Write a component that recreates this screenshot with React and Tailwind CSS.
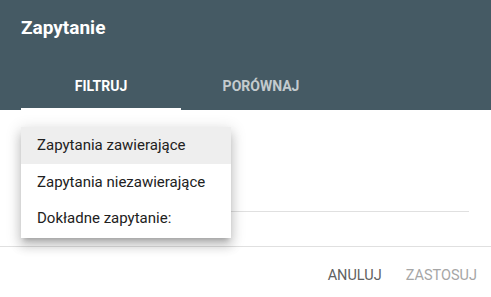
export default function App() {
  return (
    <div className="relative w-[491px] h-[297px] bg-white overflow-hidden" style={{ fontFamily: "Roboto, 'Liberation Sans', sans-serif" }}>
      <div className="bg-[#455a64]">
        <div className="h-[62px] pl-[21px] pt-[16px]">
          <div className="text-[19px] leading-[24px] font-bold text-white">Zapytanie</div>
        </div>
        <div className="flex pl-[21px] h-[48px]">
          <div className="relative w-[160px] flex items-center justify-center text-[14px] font-bold text-white uppercase">
            Filtruj
            <div className="absolute left-0 right-0 bottom-0 h-[2px] bg-white" />
          </div>
          <div className="w-[160px] flex items-center justify-center text-[14px] font-bold text-white/70 uppercase">
            Porównaj
          </div>
        </div>
      </div>
      <div className="px-[21px] pr-[22px] pt-[16px]">
        <div className="h-[86px] border-b border-[#e0e0e0]" />
      </div>
      <div className="mt-[34px] border-t border-[#e0e0e0] flex justify-end gap-2 pr-[6px] pt-[11px]">
        <button className="px-2 h-[36px] text-[14.5px] text-[#616161] uppercase">Anuluj</button>
        <button className="px-2 h-[36px] text-[14.5px] text-[#a6a6a6] uppercase">Zastosuj</button>
      </div>
      <div className="absolute left-[21px] top-[127px] w-[210px] bg-white pb-[2px] shadow-[0_5px_5px_-3px_rgba(0,0,0,0.2),0_8px_10px_1px_rgba(0,0,0,0.14),0_3px_14px_2px_rgba(0,0,0,0.12)]">
        <div className="h-[37px] flex items-center pl-[16px] bg-[#eeeeee] text-[15px] text-[#212121]">Zapytania zawierające</div>
        <div className="h-[36px] flex items-center pl-[16px] text-[15px] text-[#212121]">Zapytania niezawierające</div>
        <div className="h-[36px] flex items-center pl-[16px] text-[15px] text-[#212121]">Dokładne zapytanie:</div>
      </div>
    </div>
  );
}
